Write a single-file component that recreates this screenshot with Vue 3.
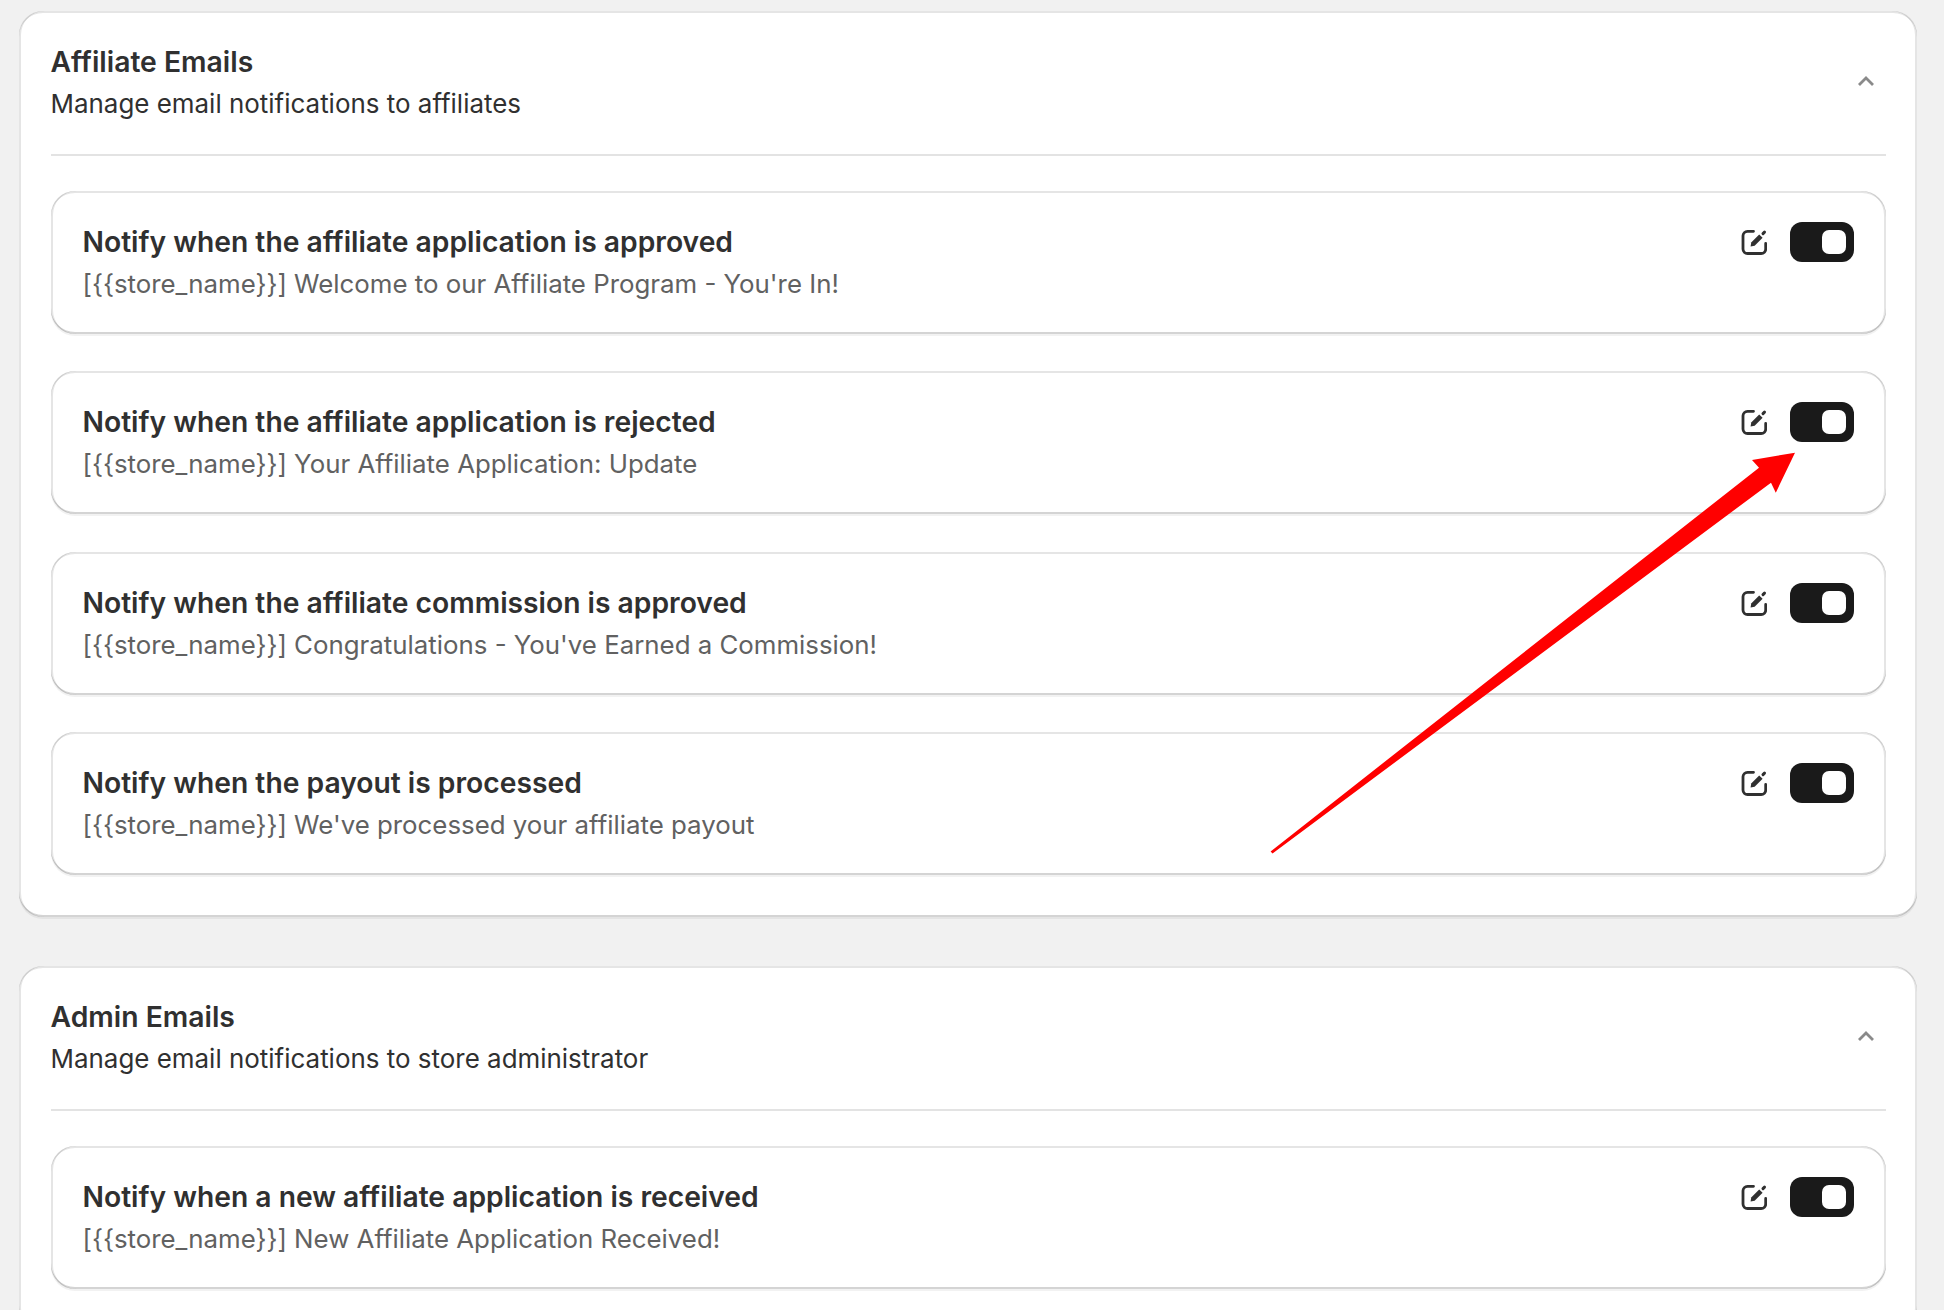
<script setup>
const sections = [
  {
    title: 'Affiliate Emails',
    subtitle: 'Manage email notifications to affiliates',
    items: [
      { title: 'Notify when the affiliate application is approved', subject: "[{{store_name}}] Welcome to our Affiliate Program - You're In!" },
      { title: 'Notify when the affiliate application is rejected', subject: '[{{store_name}}] Your Affiliate Application: Update' },
      { title: 'Notify when the affiliate commission is approved', subject: "[{{store_name}}] Congratulations - You've Earned a Commission!" },
      { title: 'Notify when the payout is processed', subject: "[{{store_name}}] We've processed your affiliate payout" }
    ]
  },
  {
    title: 'Admin Emails',
    subtitle: 'Manage email notifications to store administrator',
    items: [
      { title: 'Notify when a new affiliate application is received', subject: '[{{store_name}}] New Affiliate Application Received!' }
    ]
  }
]
</script>

<template>
  <div class="page">
    <section v-for="s in sections" :key="s.title" class="card">
      <header class="head">
        <div>
          <h2 class="head-title">{{ s.title }}</h2>
          <p class="head-sub">{{ s.subtitle }}</p>
        </div>
        <svg class="chevron" viewBox="0 0 18 12" width="18" height="12">
          <path d="M2 10 L9 3 L16 10" fill="none" stroke="#8a8a8a" stroke-width="2.8" />
        </svg>
      </header>
      <div class="list">
        <article v-for="item in s.items" :key="item.title" class="item">
          <div class="item-text">
            <h3 class="item-title">{{ item.title }}</h3>
            <p class="item-sub">{{ item.subject }}</p>
          </div>
          <div class="actions">
            <svg class="edit" viewBox="0 0 26 26" width="26" height="26">
              <path d="M12.5 2.3 H6.5 a4.5 4.5 0 0 0 -4.5 4.5 V20 a4.5 4.5 0 0 0 4.5 4.5 H20.2 a4.5 4.5 0 0 0 4.5 -4.5 V14.5" fill="none" stroke="#303030" stroke-width="2.8" stroke-linecap="round" />
              <path d="M9.6 17.4 L10.2 13.4 L18.2 5.4 L21.6 8.8 L13.6 16.8 Z" fill="#303030" />
              <path d="M22 4.6 L23.5 3.1" fill="none" stroke="#303030" stroke-width="3" stroke-linecap="round" />
            </svg>
            <div class="toggle"><span class="knob"></span></div>
          </div>
        </article>
      </div>
    </section>
    <svg class="arrow" width="1944" height="1310" viewBox="0 0 1944 1310">
      <path d="M1795 452.7 L1752 460 L1759 467.7 L1270.6 851.4 L1272.5 853.4 L1771 482.7 L1775.8 492.7 Z" fill="#ff0000" />
    </svg>
  </div>
</template>

<style>
html, body { margin: 0; background: #f1f1f1; }
</style>

<style scoped>
.page {
  position: relative;
  box-sizing: border-box;
  width: 1944px;
  height: 1310px;
  overflow: hidden;
  padding: 11px 27px 0 19px;
  background: #f1f1f1;
  font-family: Inter, "Liberation Sans", sans-serif;
  display: flex;
  flex-direction: column;
  gap: 49px;
}
.card {
  flex: none;
  background: #fff;
  border-radius: 24px;
  padding: 0 31px 42px 31.5px;
  box-shadow:
    inset 0 -2px 0 rgba(0, 0, 0, .17),
    inset 2px 0 0 rgba(0, 0, 0, .1),
    inset -2px 0 0 rgba(0, 0, 0, .1),
    inset 0 2px 0 rgba(204, 204, 204, .5),
    0 2px 0 rgba(26, 26, 26, .06);
}
.head {
  height: 145px;
  box-sizing: border-box;
  border-bottom: 2px solid #e3e3e3;
  display: flex;
  justify-content: space-between;
  align-items: flex-start;
  padding-top: 31px;
}
.head-title {
  margin: 0;
  font-size: 28.3px;
  line-height: 41px;
  font-weight: 600;
  color: #303030;
}
.head-sub {
  margin: 0;
  font-size: 25.95px;
  line-height: 41px;
  font-weight: 400;
  color: #303030;
}
.chevron { margin: 33px 11px 0 0; }
.list {
  display: flex;
  flex-direction: column;
  gap: 37.3px;
  padding-top: 35px;
}
.item {
  height: 143px;
  box-sizing: border-box;
  border-radius: 24px;
  padding: 31px 32px 0 32px;
  display: flex;
  justify-content: space-between;
  align-items: flex-start;
  box-shadow:
    inset 0 -2px 0 rgba(0, 0, 0, .17),
    inset 2px 0 0 rgba(0, 0, 0, .1),
    inset -2px 0 0 rgba(0, 0, 0, .1),
    inset 0 2px 0 rgba(204, 204, 204, .5),
    0 2px 0 rgba(26, 26, 26, .06);
}
.item-title {
  margin: 0;
  font-size: 28.25px;
  line-height: 41px;
  font-weight: 600;
  color: #303030;
}
.item-sub {
  margin: 0;
  font-size: 25.83px;
  line-height: 41px;
  font-weight: 400;
  color: #616161;
}
.actions {
  display: flex;
  align-items: center;
  gap: 23px;
}
.toggle {
  box-sizing: border-box;
  width: 64px;
  height: 40px;
  border-radius: 12px;
  background: #1a1a1a;
  display: flex;
  align-items: center;
  justify-content: flex-end;
  padding-right: 8px;
}
.knob {
  width: 24px;
  height: 24px;
  border-radius: 7px;
  background: #fff;
}
.arrow {
  position: absolute;
  left: 0;
  top: 0;
  pointer-events: none;
}
</style>
